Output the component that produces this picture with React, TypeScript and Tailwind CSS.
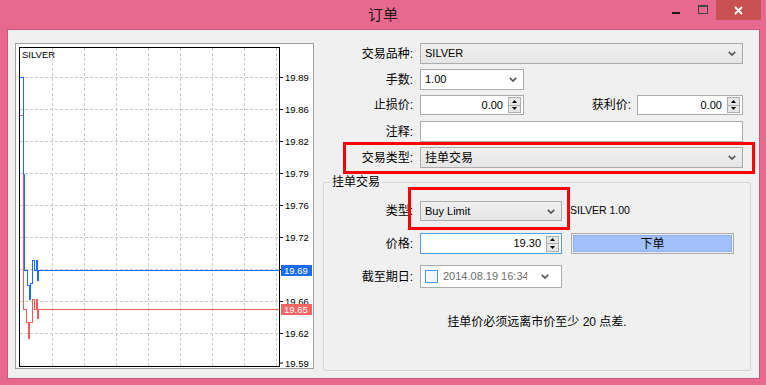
import type { ReactNode } from "react";

const levels = ["19.89", "19.86", "19.82", "19.79", "19.76", "19.72", "19.69", "19.66", "19.62", "19.59"];

const bluePath =
  "20,77.5 23.5,77.5 23.5,174 24.5,174 24.5,270.5 27.5,270.5 27.5,285 29.5,285 29.5,299 30.5,299 30.5,283 32.5,283 32.5,260 34.5,260 34.5,270 36.5,270 36.5,260 37.5,260 37.5,280 38.5,280 38.5,270.5 279,270.5";
const redPath =
  "23.5,174 23.5,309.5 26.5,309.5 26.5,322 28.5,322 28.5,338 29.5,338 29.5,322 32.5,322 32.5,299 34.5,299 34.5,309 36.5,309 36.5,299 37.5,299 37.5,318 38.5,318 38.5,309.5 279,309.5";

function Chart() {
  return (
    <div className="ml-[8px] mt-[14px] w-[299px] h-[326px] border border-[#a0a0a0] bg-white shrink-0">
      <svg width="297" height="324" viewBox="16 44 297 324" className="block">
        <rect x="16" y="44" width="297" height="324" fill="#fff" />
        {Array.from({ length: 8 }, (_, k) => (
          <line key={"v" + k} x1={52.5 + 32 * k} y1={48} x2={52.5 + 32 * k} y2={366} stroke="#c8c8c8" strokeDasharray="3 2" />
        ))}
        {Array.from({ length: 9 }, (_, k) => (
          <line key={"h" + k} x1={20} y1={77.5 + 32 * k} x2={279} y2={77.5 + 32 * k} stroke="#c8c8c8" strokeDasharray="3 2" />
        ))}
        <rect x="19.5" y="47.5" width="260" height="319" fill="none" stroke="#000" />
        {levels.map((l, k) => {
          const y = k === 9 ? 363 : 77.5 + 32 * k;
          return (
            <g key={l}>
              <line x1={280} y1={y} x2={283} y2={y} stroke="#000" />
              <text x={285} y={y + 3.5} fontSize="9.5" fill="#000" fontFamily="Liberation Sans, sans-serif">
                {l}
              </text>
            </g>
          );
        })}
        <text x="22" y="58" fontSize="9.5" fill="#000" fontFamily="Liberation Sans, sans-serif">
          SILVER
        </text>
        <line x1="20" y1="115.5" x2="23" y2="115.5" stroke="#f05a5a" />
        <polyline points={redPath} fill="none" stroke="#f05a5a" shapeRendering="crispEdges" />
        <polyline points={bluePath} fill="none" stroke="#1a6bff" shapeRendering="crispEdges" />
        <rect x="281" y="265" width="31" height="11" fill="#1a6bf0" />
        <text x="284" y="273.5" fontSize="9.5" fill="#fff" fontFamily="Liberation Sans, sans-serif">
          19.69
        </text>
        <rect x="281" y="304" width="31" height="11" fill="#f86464" />
        <text x="284" y="312.5" fontSize="9.5" fill="#fff" fontFamily="Liberation Sans, sans-serif">
          19.65
        </text>
      </svg>
    </div>
  );
}

function Chevron() {
  return (
    <svg width="8" height="5" viewBox="0 0 8 5" className="block">
      <path d="M0.8 0.8L4 4L7.2 0.8" fill="none" stroke="#555" strokeWidth="1.7" />
    </svg>
  );
}

function Spin() {
  return (
    <div className="flex flex-col w-[13px] h-[16px] border border-[#adadad] bg-[#e6e6e6] mr-[2px] shrink-0">
      <div className="flex-1 flex items-center justify-center border-b border-[#adadad]">
        <svg width="5" height="3" className="block">
          <path d="M0 3h5L2.5 0z" fill="#000" />
        </svg>
      </div>
      <div className="flex-1 flex items-center justify-center">
        <svg width="5" height="3" className="block">
          <path d="M0 0h5L2.5 3z" fill="#000" />
        </svg>
      </div>
    </div>
  );
}

function Combo({ w, text, grey, big }: { w: string; text: string; grey?: boolean; big?: boolean }) {
  return (
    <div
      className={`${w} h-full flex items-center justify-between pl-[4px] pr-[6px] border border-[#acacac] ${
        grey ? "bg-gradient-to-b from-[#f0f0f0] to-[#e5e5e5]" : "bg-white"
      }`}
    >
      <span className={big ? "text-[12px]" : "text-[11px]"}>{text}</span>
      <Chevron />
    </div>
  );
}

function SpinField({ w, value, focus }: { w: string; value: string; focus?: boolean }) {
  return (
    <div
      className={`${w} h-full flex items-center justify-end bg-white border ${
        focus ? "border-[#569de5]" : "border-[#acacac]"
      }`}
    >
      <span className="text-[11px] mr-[5px]">{value}</span>
      <Spin />
    </div>
  );
}

function Row({ label, h, mt, lw = "w-[90px]", children }: { label: string; h: string; mt: string; lw?: string; children: ReactNode }) {
  return (
    <div className={`relative flex items-center ${h} ${mt}`}>
      <span className={`${lw} text-right text-[12px] shrink-0`}>{label}</span>
      <div className="ml-[7px] h-full flex items-center">{children}</div>
    </div>
  );
}

function Form() {
  return (
    <div className="ml-[9px] w-[428px] flex flex-col">
      <Row label="交易品种:" h="h-[21px]" mt="mt-[14px]">
        <Combo w="w-[323px]" text="SILVER" grey />
      </Row>
      <Row label="手数:" h="h-[21px]" mt="mt-[5px]">
        <Combo w="w-[104px]" text="1.00" />
      </Row>
      <Row label="止损价:" h="h-[20px]" mt="mt-[5px]">
        <SpinField w="w-[104px]" value="0.00" />
        <span className="w-[107px] text-right text-[12px]">获利价:</span>
        <div className="ml-[6px] h-full flex">
          <SpinField w="w-[106px]" value="0.00" />
        </div>
      </Row>
      <Row label="注释:" h="h-[21px]" mt="mt-[6px]">
        <div className="w-[323px] h-full bg-white border border-[#acacac]" />
      </Row>
      <Row label="交易类型:" h="h-[21px]" mt="mt-[5px]">
        <Combo w="w-[323px]" text="挂单交易" grey big />
        <div className="absolute left-[20px] right-[-4px] top-[-5px] bottom-[-6px] border-[3px] border-[#ff0000] pointer-events-none" />
      </Row>

      <div className="relative mt-[14px] h-[189px] border border-[#d5d5d5] rounded-[2px] flex flex-col">
        <span className="absolute left-[6px] top-[-9px] px-[2px] bg-[#f0f0f0] text-[12px] leading-[16px]">挂单交易</span>
        <Row label="类型:" h="h-[20px]" mt="mt-[18px]" lw="w-[89px]">
          <Combo w="w-[142px]" text="Buy Limit" grey />
          <span className="ml-[8px] text-[10.5px]">SILVER 1.00</span>
          <div className="absolute left-[84px] w-[162px] top-[-14px] bottom-[-9px] border-[3px] border-[#ff0000] pointer-events-none" />
        </Row>
        <Row label="价格:" h="h-[21px]" mt="mt-[12px]" lw="w-[89px]">
          <SpinField w="w-[142px]" value="19.30" focus />
          <div className="ml-[9px] w-[163px] h-full border border-[#acacac] p-[1px]">
            <div className="w-full h-full bg-[#a2c0fb] border border-[#8db0f0] flex items-center justify-center text-[12px]">
              下单
            </div>
          </div>
        </Row>
        <Row label="截至期日:" h="h-[23px]" mt="mt-[11px]" lw="w-[89px]">
          <div className="w-[142px] h-full bg-white border border-[#acacac] flex items-center pl-[4px]">
            <div className="w-[13px] h-[13px] border border-[#4a9bf0] bg-[#f4f8fd] shrink-0" />
            <div className="ml-[5px] w-[84px] overflow-hidden whitespace-nowrap text-[11px] text-[#6d6d6d]">2014.08.19 16:34</div>
            <div className="ml-[14px]">
              <Chevron />
            </div>
          </div>
        </Row>
        <div className="mt-[26px] text-center text-[12px] leading-[16px]">挂单价必须远离市价至少 20 点差.</div>
      </div>
    </div>
  );
}

export default function App() {
  return (
    <div className="w-[766px] h-[385px] bg-[#e8698f] flex flex-col overflow-hidden text-black font-['Liberation_Sans','Noto_Sans_CJK_SC',sans-serif]">
      <div className="h-[29px] grid grid-cols-[1fr_auto_1fr] shrink-0">
        <div />
        <div className="text-[15px] leading-[29px] text-[#1a1a1a]">订单</div>
        <div className="flex justify-end items-start pr-[5px]">
          <div className="w-[26px] h-[20px] flex items-center justify-center">
            <div className="w-[8px] h-[2px] bg-[#1a1a1a] mt-[5px]" />
          </div>
          <div className="w-[27px] h-[20px] flex items-center justify-center">
            <div className="w-[10px] h-[9px] border border-[#444] border-t-2 -mt-[1px]" />
          </div>
          <div className="w-[45px] h-[20px] bg-[#c75050] flex items-center justify-center">
            <svg width="9" height="9" viewBox="0 0 9 9" className="block">
              <path d="M1 1l7 7M8 1l-7 7" stroke="#fff" strokeWidth="1.8" />
            </svg>
          </div>
        </div>
      </div>
      <div className="ml-[7px] w-[753px] h-[350px] bg-[#f0f0f0] shadow-[inset_0_0_0_1px_#c45a80] flex items-start">
        <Chart />
        <Form />
      </div>
    </div>
  );
}
